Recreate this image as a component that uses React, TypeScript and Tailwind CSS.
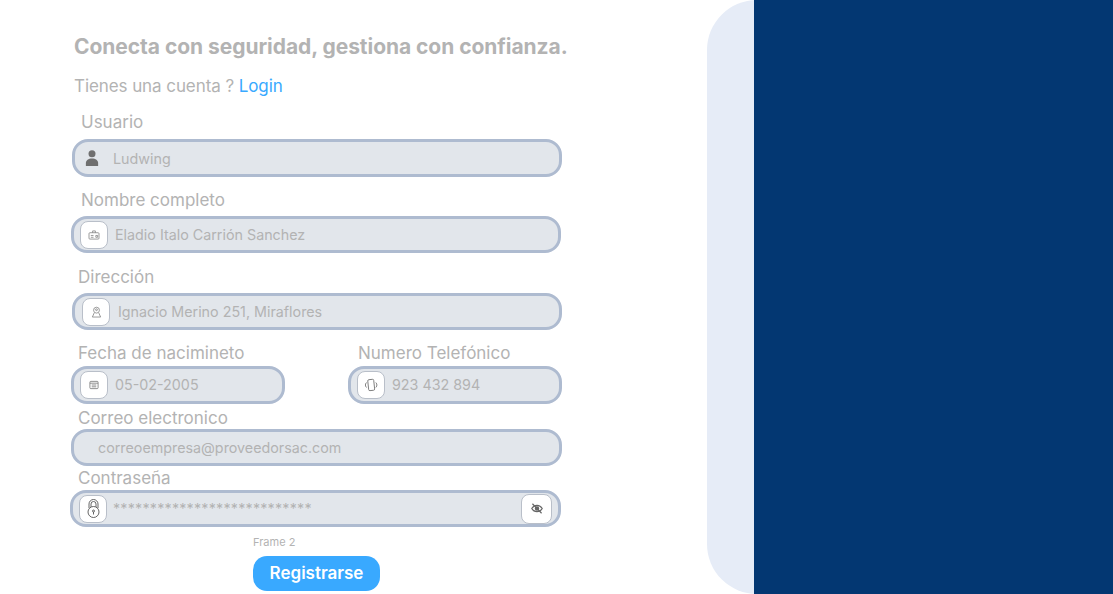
import type { ReactNode } from 'react';

const font = { fontFamily: 'Inter, "Liberation Sans", sans-serif' };

function IconBox({ children, className = 'w-[28px] h-[28px]' }: { children: ReactNode; className?: string }) {
  return (
    <span className={`flex items-center justify-center shrink-0 rounded-[8px] bg-white border border-[#b9bfc9] ${className}`}>
      {children}
    </span>
  );
}

function Label({ text, className }: { text: string; className: string }) {
  return <div className={`text-[17px] leading-[22px] text-[#b3b3b3] ${className}`}>{text}</div>;
}

function Field({ className, children }: { className: string; children: ReactNode }) {
  return (
    <div className={`flex items-center rounded-[16px] border-[3px] border-[#aebbd0] bg-[#e2e6eb] ${className}`}>
      {children}
    </div>
  );
}

export default function App() {
  return (
    <div style={font} className="flex w-full h-[594px] overflow-hidden bg-white">
      {/* Form */}
      <div className="w-[707px] shrink-0 pl-[70px] pt-[33px]">
        <h1 className="ml-[4px] text-[21px] leading-[28px] font-bold tracking-[-0.05px] text-[#b3b3b3] whitespace-nowrap">
          Conecta con seguridad, gestiona con confianza.
        </h1>
        <p className="ml-[4px] mt-[14px] text-[17px] leading-[22px] tracking-[-0.08px] text-[#b3b3b3]">
          Tienes una cuenta ? <span className="text-[#39a9ff]">Login</span>
        </p>

        <Label text="Usuario" className="ml-[11px] mt-[14px]" />
        <Field className="ml-[2px] mt-[6px] w-[490px] h-[38px] pl-[10px]">
          <svg width="14" height="18" viewBox="0 0 16 19" fill="#6f6f6f" className="shrink-0">
            <circle cx="8" cy="4.500" r="4" />
            <path d="M1 18.500v-3.200C1 12 3.800 10 8 10s7 2 7 5.300v3.200z" />
          </svg>
          <span className="ml-[14px] mt-[2px] text-[14.3px] text-[#b3b3b3]">Ludwing</span>
        </Field>

        <Label text="Nombre completo" className="ml-[11px] mt-[12px]" />
        <Field className="ml-[1px] mt-[5px] w-[490px] h-[37px] pl-[6px]">
          <IconBox>
            <svg width="12" height="10" viewBox="0 0 13 11" fill="none" stroke="#777777" strokeWidth="0.8">
              <rect x="1" y="3" width="11" height="7" rx="1" />
              <path d="M5 3V1h3v2M3 6h3M3 8h3M8.500 6v2h2V6z" />
            </svg>
          </IconBox>
          <span className="ml-[7px] text-[14.3px] text-[#b3b3b3]">Eladio Italo Carrión Sanchez</span>
        </Field>

        <Label text="Dirección" className="ml-[8px] mt-[13px]" />
        <Field className="ml-[2px] mt-[5px] w-[490px] h-[37px] pl-[7px]">
          <IconBox>
            <svg width="11" height="12" viewBox="0 0 12 13" fill="none" stroke="#777777" strokeWidth="0.8">
              <circle cx="6" cy="4.500" r="3.200" />
              <circle cx="6" cy="4" r="1" />
              <path d="M3.500 7.500 1.500 12h9l-2-4.500" />
            </svg>
          </IconBox>
          <span className="ml-[8px] text-[14.3px] text-[#b3b3b3]">Ignacio Merino 251, Miraflores</span>
        </Field>

        <div className="flex mt-[12px]">
          <div className="ml-[1px] w-[214px]">
            <Label text="Fecha de nacimineto" className="ml-[7px]" />
            <Field className="mt-[2px] w-[214px] h-[38px] pl-[6px]">
              <IconBox>
                <svg width="10" height="10" viewBox="0 0 11 11" fill="none" stroke="#777777" strokeWidth="0.9">
                  <rect x="1" y="1.500" width="9" height="8" rx="1" />
                  <path d="M1 3.500h9M3 5.500h5M3 7.500h5" />
                </svg>
              </IconBox>
              <span className="ml-[7px] text-[14.3px] text-[#b3b3b3]">05-02-2005</span>
            </Field>
          </div>
          <div className="ml-[63px] w-[214px]">
            <Label text="Numero Telefónico" className="ml-[10px]" />
            <Field className="mt-[2px] w-[214px] h-[38px] pl-[6px]">
              <IconBox>
                <svg width="14" height="14" viewBox="0 0 14 14" fill="none" stroke="#777777" strokeWidth="0.9">
                  <rect x="4.200" y="1.500" width="6" height="11" rx="1.200" transform="rotate(-6 7 7)" />
                  <path d="M2.500 4.500 1.500 6v2l1 1.500M11.800 4.500l1 1.500v2l-1 1.500" />
                </svg>
              </IconBox>
              <span className="ml-[7px] text-[14.3px] text-[#b3b3b3]">923 432 894</span>
            </Field>
          </div>
        </div>

        <Label text="Correo electronico" className="ml-[8px] mt-[3px]" />
        <Field className="ml-[1px] w-[491px] h-[37px] pl-[24px]">
          <span className="text-[14.3px] text-[#b3b3b3]">correoempresa@proveedorsac.com</span>
        </Field>

        <Label text="Contraseña" className="ml-[8px] mt-[1px]" />
        <Field className="mt-[1px] w-[491px] h-[37px] pl-[6px] pr-[6px]">
          <IconBox>
            <svg width="15" height="20" viewBox="0 0 15 20" fill="none" stroke="#555555" strokeWidth="0.9">
              <path d="M3 9V5a4.500 4.500 0 0 1 9 0v4M5 8V5a2.500 2.500 0 0 1 5 0v3" />
              <circle cx="7.500" cy="13" r="5.500" />
              <circle cx="7.500" cy="12" r="1" />
              <path d="M7.500 13v2.500" />
            </svg>
          </IconBox>
          <span className="ml-[6px] text-[14.3px] leading-[15px] tracking-[0.2px] text-[#b3b3b3]">***************************</span>
          <IconBox className="ml-auto w-[31px] h-[30px]">
            <svg width="12" height="11" viewBox="0 0 13 12" fill="none" stroke="#666666" strokeWidth="1.300">
              <path d="M.8 6C2 3.800 4 2.500 6.500 2.500S11 3.800 12.200 6C11 8.200 9 9.500 6.500 9.500S2 8.200.8 6z" />
              <circle cx="6.500" cy="6" r="1.800" fill="#666666" />
              <path d="m1.500 .8 10 10.400" />
            </svg>
          </IconBox>
        </Field>

        <div className="ml-[183px] mt-[8px] text-[11px] leading-[14px] text-[#b3b3b3]">Frame 2</div>
        <button className="ml-[183px] mt-[7px] w-[127px] h-[35px] rounded-[14px] bg-[#39a9ff] text-white text-[17px] font-semibold">
          Registrarse
        </button>
      </div>

      {/* Right panel */}
      <div className="flex-1 flex justify-end rounded-l-[50px] bg-[#e6ecf7]">
        <div className="w-[359.500px] h-full bg-[#033772]" />
      </div>
    </div>
  );
}
